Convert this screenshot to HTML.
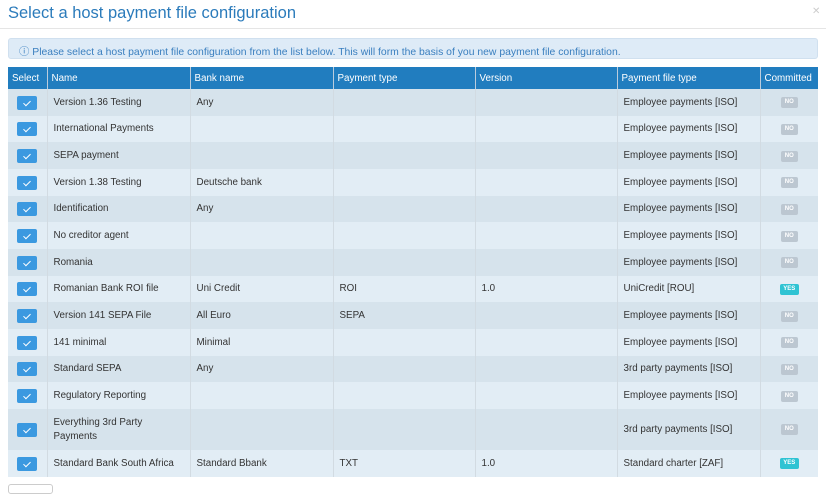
<!DOCTYPE html>
<html><head><style>
*{margin:0;padding:0;box-sizing:border-box}
body{width:826px;height:488px;overflow:hidden;background:#fff;font-family:"Liberation Sans",sans-serif;position:relative}
.title{position:absolute;left:8px;top:4px;font-size:16.5px;color:#2b7bbb}
.x{position:absolute;left:812px;top:6px;font-size:10px;color:#ccc}
.hr{position:absolute;left:0;top:28px;width:826px;height:1px;background:#e5e5e5}
.info{position:absolute;left:8px;top:38px;width:810px;height:21px;background:#deebf7;border:1px solid #d0e0ef;border-radius:3px;font-size:10.4px;color:#3a7fbf;padding:4px 0 0 10px;white-space:nowrap}
table{position:absolute;left:8px;top:67px;width:810px;border-collapse:collapse;font-size:9.8px;color:#333}
th{background:#217dbf;color:#fff;font-weight:normal;text-align:left;height:22px;padding:0 4px;border-right:1px solid #bcd;font-size:9.8px}
td{height:26.67px;padding:1px 6px 0;border-right:1px solid #d2dbe2;vertical-align:middle;line-height:14px}
tr:nth-child(odd) td{background:#e2edf5}
tr:nth-child(even) td{background:#d6e3ec}
th:last-child,td:last-child{border-right:none}
.cb{display:block;margin:0 auto;width:20px;height:14px;background:#3b99e0;border-radius:2px;position:relative}
.cb:after{content:"";position:absolute;left:8px;top:3px;width:3px;height:6px;border:solid #fff;border-width:0 1.5px 1.5px 0;transform:rotate(45deg)}
.no,.yes{display:block;margin:0 auto;width:17px;height:11px;border-radius:2px;font-size:6px;font-weight:bold;color:#fff;text-align:center;line-height:11px}
.no{background:#bcc7d1}.yes{background:#2fc3d3;width:19px}
.btn{position:absolute;left:8px;top:484px;width:45px;height:10px;border:1px solid #ccc;border-radius:3px}
</style></head><body>
<div class="title">Select a host payment file configuration</div>
<div class="x">✕</div>
<div class="hr"></div>
<div class="info">ⓘ Please select a host payment file configuration from the list below. This will form the basis of you new payment file configuration.</div>
<table>
<colgroup><col style="width:39px"><col style="width:143px"><col style="width:143px"><col style="width:142px"><col style="width:142px"><col style="width:143px"><col style="width:58px"></colgroup>
<tr><th>Select</th><th>Name</th><th>Bank name</th><th>Payment type</th><th>Version</th><th>Payment file type</th><th>Committed</th></tr>
<tr><td><i class="cb"></i></td><td>Version 1.36 Testing</td><td>Any</td><td></td><td></td><td>Employee payments [ISO]</td><td><b class="no">NO</b></td></tr>
<tr><td><i class="cb"></i></td><td>International Payments</td><td></td><td></td><td></td><td>Employee payments [ISO]</td><td><b class="no">NO</b></td></tr>
<tr><td><i class="cb"></i></td><td>SEPA payment</td><td></td><td></td><td></td><td>Employee payments [ISO]</td><td><b class="no">NO</b></td></tr>
<tr><td><i class="cb"></i></td><td>Version 1.38 Testing</td><td>Deutsche bank</td><td></td><td></td><td>Employee payments [ISO]</td><td><b class="no">NO</b></td></tr>
<tr><td><i class="cb"></i></td><td>Identification</td><td>Any</td><td></td><td></td><td>Employee payments [ISO]</td><td><b class="no">NO</b></td></tr>
<tr><td><i class="cb"></i></td><td>No creditor agent</td><td></td><td></td><td></td><td>Employee payments [ISO]</td><td><b class="no">NO</b></td></tr>
<tr><td><i class="cb"></i></td><td>Romania</td><td></td><td></td><td></td><td>Employee payments [ISO]</td><td><b class="no">NO</b></td></tr>
<tr><td><i class="cb"></i></td><td>Romanian Bank ROI file</td><td>Uni Credit</td><td>ROI</td><td>1.0</td><td>UniCredit [ROU]</td><td><b class="yes">YES</b></td></tr>
<tr><td><i class="cb"></i></td><td>Version 141 SEPA File</td><td>All Euro</td><td>SEPA</td><td></td><td>Employee payments [ISO]</td><td><b class="no">NO</b></td></tr>
<tr><td><i class="cb"></i></td><td>141 minimal</td><td>Minimal</td><td></td><td></td><td>Employee payments [ISO]</td><td><b class="no">NO</b></td></tr>
<tr><td><i class="cb"></i></td><td>Standard SEPA</td><td>Any</td><td></td><td></td><td>3rd party payments [ISO]</td><td><b class="no">NO</b></td></tr>
<tr><td><i class="cb"></i></td><td>Regulatory Reporting</td><td></td><td></td><td></td><td>Employee payments [ISO]</td><td><b class="no">NO</b></td></tr>
<tr><td style="height:41px"><i class="cb"></i></td><td>Everything 3rd Party<br>Payments</td><td></td><td></td><td></td><td>3rd party payments [ISO]</td><td><b class="no">NO</b></td></tr>
<tr><td><i class="cb"></i></td><td>Standard Bank South Africa</td><td>Standard Bbank</td><td>TXT</td><td>1.0</td><td>Standard charter [ZAF]</td><td><b class="yes">YES</b></td></tr>
</table>
<div class="btn"></div>
</body></html>
